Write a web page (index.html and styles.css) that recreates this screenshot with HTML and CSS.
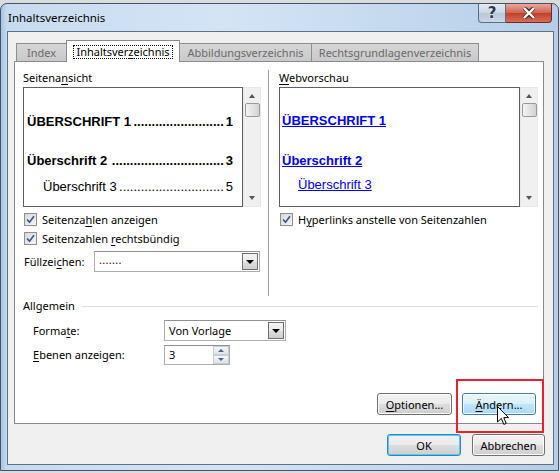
FILE: index.html
```html
<!DOCTYPE html>
<html lang="de">
<head>
  <meta charset="UTF-8">
  <meta name="viewport" content="width=device-width, initial-scale=1.0">
  <title>Inhaltsverzeichnis</title>
  <link rel="stylesheet" href="styles.css">
</head>
<body>
  <div class="window">
    <div class="titlebar">
      <span class="title">Inhaltsverzeichnis</span>
      <div class="caption-btns">
        <span class="cap-btn help">?</span>
        <span class="cap-btn close">
          <svg width="14" height="12" viewBox="0 0 14 12">
            <path d="M2 1 L7 5 L12 1 M2 11 L7 7 L12 11" stroke="#3b2a2a" stroke-width="4" fill="none"/>
            <path d="M2 1 L12 11 M12 1 L2 11" stroke="#fff" stroke-width="2.4" fill="none"/>
          </svg>
        </span>
      </div>
    </div>

    <div class="client">
      <div class="tabs">
        <span class="tab tab-index">Index</span>
        <span class="tab tab-toc active"><span class="focus">Inhaltsver<u>z</u>eichnis</span></span>
        <span class="tab tab-fig">Abbildungsverzeichnis</span>
        <span class="tab tab-law">Rechtsgrundlagenverzeichnis</span>
      </div>

      <div class="panel">
        <div class="cols">
          <div class="col col-left">
            <div class="label">Seitena<u>n</u>sicht</div>
            <div class="preview">
              <div class="page">
                <div class="toc-line h1"><span>ÜBERSCHRIFT 1</span><span class="dots">.........................</span><span>1</span></div>
                <div class="toc-line h2"><span>Überschrift 2</span><span class="dots">...............................</span><span>3</span></div>
                <div class="toc-line h3"><span>Überschrift 3</span><span class="dots">.............................</span><span>5</span></div>
              </div>
              <div class="scrollbar">
                <span class="arrow up"></span>
                <span class="thumb"></span>
                <span class="arrow down"></span>
              </div>
            </div>

            <div class="check-row">
              <span class="checkbox"><svg width="9" height="9" viewBox="0 0 9 9"><path d="M1 4.5 L3.5 7.2 L8 1.2" stroke="#3d5a98" stroke-width="1.7" fill="none"/></svg></span>
              <span>Seitenza<u>h</u>len anzeigen</span>
            </div>
            <div class="check-row">
              <span class="checkbox"><svg width="9" height="9" viewBox="0 0 9 9"><path d="M1 4.5 L3.5 7.2 L8 1.2" stroke="#3d5a98" stroke-width="1.7" fill="none"/></svg></span>
              <span>Seitenzahlen <u>r</u>echtsbündig</span>
            </div>
            <div class="field-row fill-row">
              <span class="fill-label">Füllzei<u>c</u>hen:</span>
              <div class="combo fill-combo">
                <span class="combo-text fill-dots">.......</span>
                <span class="combo-btn"></span>
              </div>
            </div>
          </div>

          <div class="col col-right">
            <div class="label"><u>W</u>ebvorschau</div>
            <div class="preview web">
              <div class="page">
                <div class="web-line h1"><a>ÜBERSCHRIFT 1</a></div>
                <div class="web-line h2"><a>Überschrift 2</a></div>
                <div class="web-line h3"><a>Überschrift 3</a></div>
              </div>
              <div class="scrollbar">
                <span class="arrow up"></span>
                <span class="thumb"></span>
                <span class="arrow down"></span>
              </div>
            </div>

            <div class="check-row">
              <span class="checkbox"><svg width="9" height="9" viewBox="0 0 9 9"><path d="M1 4.5 L3.5 7.2 L8 1.2" stroke="#3d5a98" stroke-width="1.7" fill="none"/></svg></span>
              <span>H<u>y</u>perlinks anstelle von Seitenzahlen</span>
            </div>
          </div>
        </div>

        <div class="group-head">
          <span>Allgemein</span>
          <span class="group-line"></span>
        </div>
        <div class="field-row general-row">
          <span class="field-label">Forma<u>t</u>e:</span>
          <div class="combo format-combo">
            <span class="combo-text">Von Vorlage</span>
            <span class="combo-btn"></span>
          </div>
        </div>
        <div class="field-row general-row levels-row">
          <span class="field-label"><u>E</u>benen anzeigen:</span>
          <div class="spin">
            <span class="spin-text">3</span>
            <span class="spin-btns">
              <span class="spin-btn"><span class="spin-arrow up"></span></span>
              <span class="spin-btn"><span class="spin-arrow down"></span></span>
            </span>
          </div>
        </div>

        <div class="panel-btns">
          <button class="btn"><u>O</u>ptionen...</button>
          <button class="btn hover"><u>Ä</u>ndern...</button>
        </div>
      </div>

      <div class="dialog-btns">
        <button class="btn default">OK</button>
        <button class="btn">Abbrechen</button>
      </div>
    </div>
  </div>

  <div class="highlight"></div>
  <svg class="cursor" width="13" height="20" viewBox="0 0 13 20">
    <path d="M0.5 0.5 L0.5 16 L4.3 12.4 L6.8 18.4 L9.2 17.4 L6.8 11.6 L11.6 11.6 Z" fill="#fff" stroke="#000" stroke-width="1" stroke-linejoin="round"/>
  </svg>
</body>
</html>
```

FILE: styles.css
```css
body {
  margin: 0;
  background: #dcdcdc;
  font-family: "Noto Sans", sans-serif;
  font-size: 11px;
  color: #000;
  position: relative;
}

u {
  text-decoration-thickness: 1px;
  text-underline-offset: 2px;
}

/* window frame */
.window {
  margin-top: 3px;
  width: 557px;
  height: 466px;
  border: 1px solid #41546a;
  border-radius: 7px 7px 0 0;
  background: linear-gradient(to right, #a9c4e0 0, #c7dbf0 6px, #d4e4f5 40%, #c3d8ee 75%, #b4cde8 100%);
}

.titlebar {
  height: 27px;
  display: flex;
  align-items: flex-start;
  padding-left: 7px;
}
.title {
  margin-top: 6px;
  line-height: 16px;
  font-size: 11.5px;
}
.caption-btns {
  margin-left: auto;
  margin-right: 6px;
  display: flex;
}
.cap-btn {
  height: 18px;
  display: flex;
  align-items: center;
  justify-content: center;
  border: 1px solid #5c6e83;
  border-top: none;
}
.help {
  width: 26px;
  border-radius: 0 0 0 4px;
  background: linear-gradient(#e2ebf5, #c8d6e5 50%, #b6c7da 51%, #c9d8e8);
  color: #2d3a4a;
  font-size: 15px;
  font-weight: bold;
  font-family: "DejaVu Sans", sans-serif;
  text-shadow: 0 0 2px #fff;
}
.close {
  width: 45px;
  border-left: none;
  border-color: #6e2a24;
  border-radius: 0 0 4px 0;
  background: linear-gradient(#e9a99c, #d0614f 50%, #c0402c 51%, #d96d52);
}

/* client area */
.client {
  margin-left: 6px;
  width: 539px;
  height: 424px;
  border: 1px solid #5d7286;
  background: #f0f0f0;
  padding: 8px 0 0 6px;
}

.tabs {
  display: flex;
  align-items: flex-end;
  height: 21px;
  padding-left: 2px;
  position: relative;
  z-index: 1;
}
.tab {
  box-sizing: border-box;
  height: 18px;
  border: 1px solid #8c8e94;
  border-bottom: none;
  background: linear-gradient(#d6d6d6, #c9c9c9);
  color: #6a6a6a;
  display: flex;
  align-items: center;
  justify-content: center;
  line-height: 14px;
}
.tab-index { width: 51px; }
.tab-toc {
  width: 114px;
  margin-left: -1px;
}
.tab-fig {
  width: 133px;
  margin-left: -1px;
}
.tab-law {
  width: 168px;
  margin-left: -1px;
}
.tab.active {
  height: 22px;
  margin-bottom: -1px;
  background: #fff;
  color: #000;
  border-color: #898c95;
}
.focus {
  border: 1px dotted #000;
  padding: 0 2px;
  line-height: 12px;
}

/* tab page */
.panel {
  width: 528px;
  height: 361px;
  border: 1px solid #898c95;
  background: #fff;
}

.cols {
  display: flex;
  margin-top: 8px;
  height: 226px;
}
.col-left {
  width: 238px;
  padding: 0 7px 0 8px;
  border-right: 1px solid #a0a0a0;
}
.col-right {
  width: 259px;
  padding-left: 10px;
}
.label {
  line-height: 16px;
  margin-bottom: 1px;
}

.preview {
  display: flex;
  height: 120px;
}
.page {
  flex: 1;
  border: 1px solid #5f5f5f;
  padding: 0 9px 0 3px;
  font-family: "Liberation Sans", Arial, sans-serif;
  font-size: 13px;
  overflow: hidden;
}
.toc-line {
  display: flex;
  line-height: 16px;
  white-space: nowrap;
}
.toc-line .dots {
  margin-left: auto;
  margin-right: 2px;
}
.toc-line.h1 {
  margin-top: 26px;
  font-weight: bold;
}
.toc-line.h2 {
  margin-top: 23px;
  font-weight: bold;
}
.toc-line.h3 {
  margin-top: 10px;
  padding-left: 16px;
}

.web .page { padding-left: 2px; }
.web-line {
  line-height: 16px;
}
.web-line a {
  color: #0000ee;
  text-decoration: underline;
}
.web-line.h1 {
  margin-top: 25px;
  font-weight: bold;
}
.web-line.h2 {
  margin-top: 24px;
  font-weight: bold;
}
.web-line.h3 {
  margin-top: 8px;
  padding-left: 16px;
}

.scrollbar {
  width: 18px;
  background: #f0f0f0;
  border: 1px solid #e8e8e8;
  box-sizing: border-box;
  display: flex;
  flex-direction: column;
  align-items: center;
}
.arrow {
  width: 0;
  height: 0;
  border-left: 3.5px solid transparent;
  border-right: 3.5px solid transparent;
}
.arrow.up {
  margin-top: 6px;
  border-bottom: 4px solid #555;
}
.arrow.down {
  margin-top: auto;
  margin-bottom: 6px;
  border-top: 4px solid #555;
}
.thumb {
  margin-top: 5px;
  width: 15px;
  height: 14px;
  box-sizing: border-box;
  border: 1px solid #9a9a9a;
  border-radius: 2px;
  background: linear-gradient(to right, #f4f4f4, #e0e0e0 60%, #d2d2d2);
}

.check-row {
  display: flex;
  align-items: center;
  height: 19px;
  gap: 5px;
}
.preview + .check-row { margin-top: 3px; }
.checkbox {
  width: 13px;
  height: 13px;
  box-sizing: border-box;
  border: 1px solid #8f8f8f;
  background: linear-gradient(135deg, #d8d8d8, #f6f6f6);
  display: flex;
  align-items: center;
  justify-content: center;
  margin-left: 1px;
}

.field-row {
  display: flex;
  align-items: center;
}
.fill-row {
  margin-top: 3px;
  height: 21px;
}
.fill-label {
  width: 70px;
  padding-left: 1px;
}

.combo {
  height: 21px;
  box-sizing: border-box;
  border: 1px solid #abadb3;
  border-top-color: #8e9196;
  background: #fff;
  display: flex;
  align-items: center;
}
.combo-text {
  flex: 1;
  padding-left: 4px;
}
.fill-dots {
  color: #3a0000;
  letter-spacing: 0.3px;
  position: relative;
  top: -2px;
}
.combo-btn {
  width: 16px;
  height: 17px;
  margin-right: 1px;
  box-sizing: border-box;
  border: 1px solid #707070;
  background: linear-gradient(#f2f2f2, #ebebeb 50%, #dddddd 51%, #cfcfcf);
  display: flex;
  align-items: center;
  justify-content: center;
}
.combo-btn::after {
  content: "";
  border-left: 4px solid transparent;
  border-right: 4px solid transparent;
  border-top: 4px solid #000;
}
.fill-combo { width: 166px; }

.group-head {
  display: flex;
  align-items: center;
  margin: 2px 5px 0 8px;
  line-height: 16px;
}
.group-line {
  flex: 1;
  margin-left: 7px;
  border-top: 1px solid #d5dfe5;
}
.general-row {
  margin-top: 6px;
  padding-left: 18px;
  height: 21px;
}
.levels-row { margin-top: 3px; }
.field-label { width: 131px; }
.format-combo { width: 122px; }

.spin {
  width: 66px;
  height: 20px;
  box-sizing: border-box;
  border: 1px solid #abadb3;
  border-top-color: #8e9196;
  display: flex;
}
.spin-text {
  flex: 1;
  padding-left: 4px;
  line-height: 18px;
}
.spin-btns {
  width: 16px;
  display: flex;
  flex-direction: column;
}
.spin-btn {
  flex: 1;
  border: 1px solid #c4cdd8;
  background: linear-gradient(#f4f6f9, #dde4ec);
  display: flex;
  align-items: center;
  justify-content: center;
}
.spin-arrow {
  border-left: 3.5px solid transparent;
  border-right: 3.5px solid transparent;
}
.spin-arrow.up { border-bottom: 3px solid #4d6185; }
.spin-arrow.down { border-top: 3px solid #4d6185; }

/* buttons */
.btn {
  height: 22px;
  box-sizing: border-box;
  border: 1px solid #707070;
  border-radius: 3px;
  background: linear-gradient(#f2f2f2, #ebebeb 50%, #dddddd 51%, #cfcfcf);
  font-family: "Noto Sans", sans-serif;
  font-size: 11px;
  color: #000;
  padding: 0;
  box-shadow: inset 0 0 0 1px #fcfcfc;
}
.btn.hover {
  border-color: #3c7fb1;
  background: linear-gradient(#eaf6fd, #d9f0fc 50%, #bee6fd 51%, #a7d9f5);
}
.btn.default {
  border-color: #3c7fb1;
  box-shadow: inset 0 0 0 1px #48d3f7;
}

.panel-btns {
  display: flex;
  justify-content: flex-end;
  gap: 10px;
  margin: 28px 7px 0 0;
}
.panel-btns .btn:first-child { width: 75px; }
.panel-btns .btn:last-child { width: 74px; }

.dialog-btns {
  display: flex;
  justify-content: flex-end;
  gap: 11px;
  margin: 10px 8px 0 0;
}
.dialog-btns .btn:first-child { width: 74px; }
.dialog-btns .btn:last-child { width: 73px; }

/* annotation drawn over the dialog */
.highlight {
  position: absolute;
  left: 456px;
  top: 379px;
  width: 84px;
  height: 50px;
  border: 2px solid #e8212b;
}
.cursor {
  position: absolute;
  left: 497px;
  top: 406px;
}
```
